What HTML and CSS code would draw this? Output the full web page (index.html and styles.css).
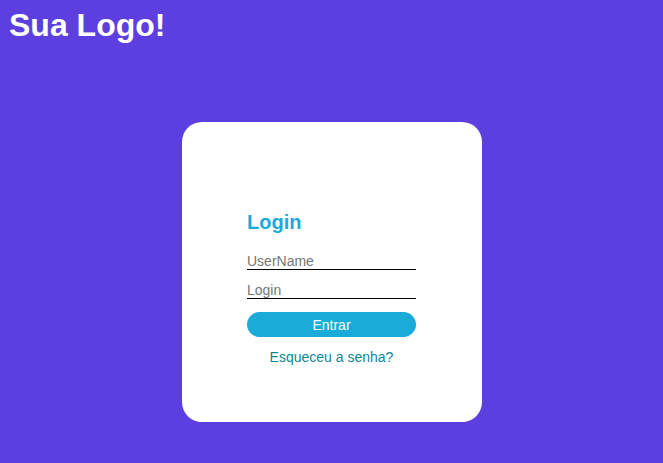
FILE: index.html
```html
<!DOCTYPE html>
<html lang="pt">
<head>
<meta charset="utf-8">
<title>Login</title>
<link rel="stylesheet" href="styles.css">
</head>
<body>
<header class="header">
  <h1 class="logo">Sua Logo!</h1>
</header>
<main class="main">
  <div class="card">
    <form class="form">
      <h2 class="title">Login</h2>
      <input class="field" type="text" placeholder="UserName">
      <input class="field" type="password" placeholder="Login">
      <button class="btn" type="button">Entrar</button>
      <a class="forgot" href="#">Esqueceu a senha?</a>
    </form>
  </div>
</main>
</body>
</html>
```
FILE: styles.css
```css
* { box-sizing: border-box; }
html, body {
  margin: 0;
  height: 100%;
}
body {
  background: #5d3fe0;
  font-family: "Liberation Sans", Arial, sans-serif;
}
.header {
  padding: 7px 9px 0;
}
.logo {
  margin: 0;
  font-size: 32px;
  font-weight: bold;
  color: #ffffff;
  line-height: 37px;
}
.main {
  display: flex;
  justify-content: center;
  padding-top: 78px;
  padding-left: 1px;
}
.card {
  width: 300px;
  height: 300px;
  background: #ffffff;
  border-radius: 20px;
  padding: 89px 0 0 65px;
}
.form {
  width: 169px;
  display: flex;
  flex-direction: column;
}
.title {
  margin: 0 0 19px;
  font-size: 20px;
  line-height: 23px;
  font-weight: bold;
  color: #1aabd8;
}
.field {
  display: block;
  width: 100%;
  height: 17px;
  padding: 0;
  border: none;
  border-bottom: 1px solid #000;
  font-family: "Liberation Sans", Arial, sans-serif;
  font-size: 14px;
  outline: none;
  margin-bottom: 12px;
  background: transparent;
}
.field::placeholder { color: #757575; }
.field + .field { margin-bottom: 13px; }
.btn {
  height: 25px;
  border: none;
  border-radius: 13px;
  background: #1aabd8;
  color: #ffffff;
  font-family: "Liberation Sans", Arial, sans-serif;
  font-size: 14px;
  padding: 0;
}
.forgot {
  margin-top: 12px;
  text-align: center;
  color: #0c8796;
  text-decoration: none;
  font-size: 14px;
  line-height: 16px;
}
```
